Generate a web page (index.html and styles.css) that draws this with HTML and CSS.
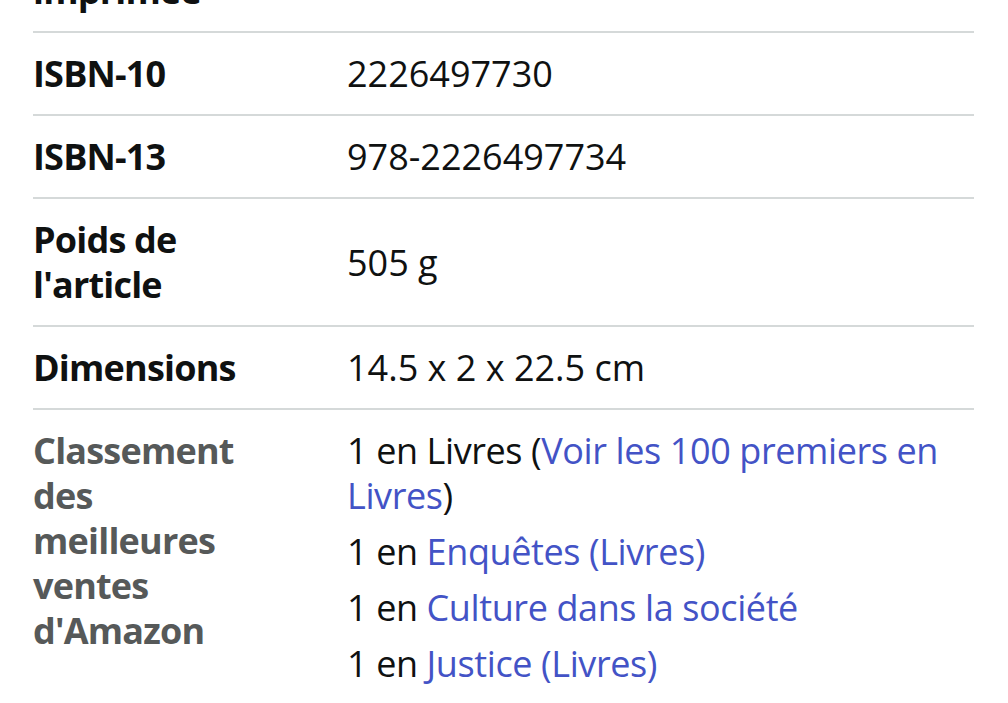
FILE: index.html
```html
<!DOCTYPE html>
<html lang="fr">
<head>
<meta charset="utf-8">
<link rel="stylesheet" href="styles.css">
</head>
<body>
<div class="details">
  <div class="row">
    <div class="label">Nombre de pages de l'édition imprimée</div>
    <div class="value">400 pages</div>
  </div>
  <div class="row">
    <div class="label">ISBN-10</div>
    <div class="value">2226497730</div>
  </div>
  <div class="row">
    <div class="label">ISBN-13</div>
    <div class="value">978-2226497734</div>
  </div>
  <div class="row">
    <div class="label">Poids de l'article</div>
    <div class="value">505 g</div>
  </div>
  <div class="row">
    <div class="label">Dimensions</div>
    <div class="value">14.5 x 2 x 22.5 cm</div>
  </div>
  <div class="row row-last">
    <div class="label label-muted">Classement des meilleures ventes d'Amazon</div>
    <ul class="ranks">
      <li>1 en Livres (<a href="#" class="link">Voir les 100 premiers en Livres</a>)</li>
      <li>1 en <a href="#" class="link">Enquêtes (Livres)</a></li>
      <li>1 en <a href="#" class="link">Culture dans la société</a></li>
      <li>1 en <a href="#" class="link">Justice (Livres)</a></li>
    </ul>
  </div>
</div>
</body>
</html>
```

FILE: styles.css
```css
html, body {
  margin: 0;
  padding: 0;
  background: #ffffff;
}

body {
  font-family: "Open Sans", "Noto Sans", sans-serif;
  font-size: 36px;
  line-height: 45px;
  color: #0f1111;
  overflow: hidden;
}

.details {
  margin: -185px 34px 0 33px;
}

.row {
  display: grid;
  grid-template-columns: 242px 1fr;
  column-gap: 72px;
  align-items: center;
  padding: 18px 0;
  border-bottom: 2px solid #d5d9d9;
}

.row-last {
  border-bottom: none;
  align-items: start;
}

.label {
  font-weight: 700;
  letter-spacing: -0.8px;
  color: #0f1111;
}

.label-muted {
  color: #565959;
}

.value {
  color: #0f1111;
}

.ranks {
  list-style: none;
  margin: 0;
  padding: 0;
  display: flex;
  flex-direction: column;
  gap: 11px;
  letter-spacing: -0.4px;
}

.link {
  color: #4353c6;
  text-decoration: none;
}
```
